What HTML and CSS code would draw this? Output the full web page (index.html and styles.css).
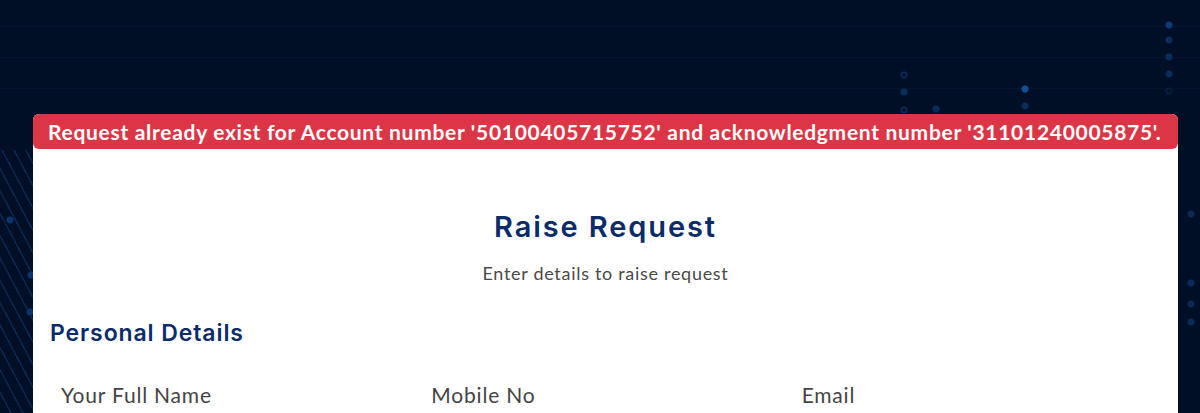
FILE: index.html
```html
<!DOCTYPE html>
<html lang="en">
<head>
<meta charset="utf-8">
<title>Raise Request</title>
<link rel="stylesheet" href="styles.css">
</head>
<body>
<div class="page">
  <div class="card">
    <div class="alert">Request already exist for Account number '50100405715752' and acknowledgment number '31101240005875'.</div>
    <div class="card-body">
      <h1 class="title">Raise Request</h1>
      <p class="subtitle">Enter details to raise request</p>
      <h2 class="section">Personal Details</h2>
      <div class="fields">
        <div class="field"><label class="label">Your Full Name</label></div>
        <div class="field"><label class="label">Mobile No</label></div>
        <div class="field"><label class="label">Email</label></div>
      </div>
    </div>
  </div>
</div>
</body>
</html>
```

FILE: styles.css
```css
html, body {
  margin: 0;
  padding: 0;
  height: 100%;
}

body {
  background-color: #010f26;
  background-image:
    radial-gradient(circle at 1169px 25px, #0b3a78 0 3px, transparent 4px),
    radial-gradient(circle at 1169px 40px, #082c5e 0 3px, transparent 4px),
    radial-gradient(circle at 1169px 57px, #082c5e 0 3px, transparent 4px),
    radial-gradient(circle at 1169px 74px, #082c5e 0 3px, transparent 4px),
    radial-gradient(circle at 1169px 91px, transparent 0 2px, #061f45 2px 3px, transparent 4px),
    radial-gradient(circle at 1025px 89px, #0f4f9c 0 3px, transparent 4px),
    radial-gradient(circle at 1025px 106px, #082c5e 0 3px, transparent 4px),
    radial-gradient(circle at 936px 109px, #082c5e 0 3px, transparent 4px),
    radial-gradient(circle at 904px 75px, transparent 0 2px, #082c5e 2px 3px, transparent 4px),
    radial-gradient(circle at 904px 92px, #082c5e 0 3px, transparent 4px),
    radial-gradient(circle at 904px 110px, transparent 0 2px, #082c5e 2px 3px, transparent 4px),
    radial-gradient(circle at 1191px 214px, #072a58 0 3px, transparent 4px),
    radial-gradient(circle at 1191px 283px, #072a58 0 3px, transparent 4px),
    radial-gradient(circle at 1191px 304px, #072a58 0 3px, transparent 4px),
    radial-gradient(circle at 1191px 322px, #072a58 0 3px, transparent 4px),
    radial-gradient(circle at 10px 220px, #0a3370 0 3px, transparent 4px),
    radial-gradient(circle at 31px 275px, #0a3370 0 3px, transparent 4px),
    radial-gradient(circle at 30px 312px, #0a3370 0 3px, transparent 4px),
    linear-gradient(to bottom, transparent 26px, #03142e 26px 27px, transparent 27px 57px, #03142e 57px 58px, transparent 58px 88px, #03142e 88px 89px, transparent 89px),
    repeating-linear-gradient(62deg, transparent 0 9px, #0a2550 9px 10.5px);
  background-repeat: no-repeat;
  background-size: auto, auto, auto, auto, auto, auto, auto, auto, auto, auto, auto, auto, auto, auto, auto, auto, auto, auto, 100% 100%, 33px 263px;
  background-position: 0 0, 0 0, 0 0, 0 0, 0 0, 0 0, 0 0, 0 0, 0 0, 0 0, 0 0, 0 0, 0 0, 0 0, 0 0, 0 0, 0 0, 0 0, 0 0, 0 150px;
  overflow: hidden;
}

.page {
  padding: 114px 22px 0 33px;
}

.card {
  background: #ffffff;
  border-radius: 6px 6px 0 0;
  min-height: 299px;
}

.alert {
  background: #dc3545;
  color: #ffffff;
  border-radius: 6px;
  height: 35px;
  box-sizing: border-box;
  padding: 0 0 0 15px;
  font-family: Lato, "Open Sans", sans-serif;
  font-weight: 700;
  font-size: 21px;
  letter-spacing: 0.7px;
  line-height: 35px;
  white-space: nowrap;
  overflow: hidden;
}

.card-body {
  padding: 60px 17px 0 17px;
}

.title {
  margin: 0;
  text-align: center;
  font-family: Inter, "Open Sans", sans-serif;
  font-weight: 600;
  font-size: 29px;
  letter-spacing: 1.9px;
  line-height: 36px;
  color: #0b2b6b;
}

.subtitle {
  margin: 16px 0 0 0;
  text-align: center;
  font-family: Lato, "Open Sans", sans-serif;
  font-weight: 400;
  font-size: 18px;
  letter-spacing: 0.7px;
  line-height: 24px;
  color: #4a4a4a;
}

.section {
  margin: 33px 0 0 0;
  font-family: Inter, "Open Sans", sans-serif;
  font-weight: 600;
  font-size: 23px;
  letter-spacing: 0.9px;
  line-height: 30px;
  color: #0b2b6b;
}

.fields {
  display: grid;
  grid-template-columns: repeat(3, 1fr);
  margin-top: 33px;
}

.field {
  padding: 0 11px;
}

.label {
  display: block;
  font-family: Lato, "Open Sans", sans-serif;
  font-weight: 400;
  font-size: 21px;
  letter-spacing: 0.8px;
  line-height: 27px;
  color: #444444;
}
```
